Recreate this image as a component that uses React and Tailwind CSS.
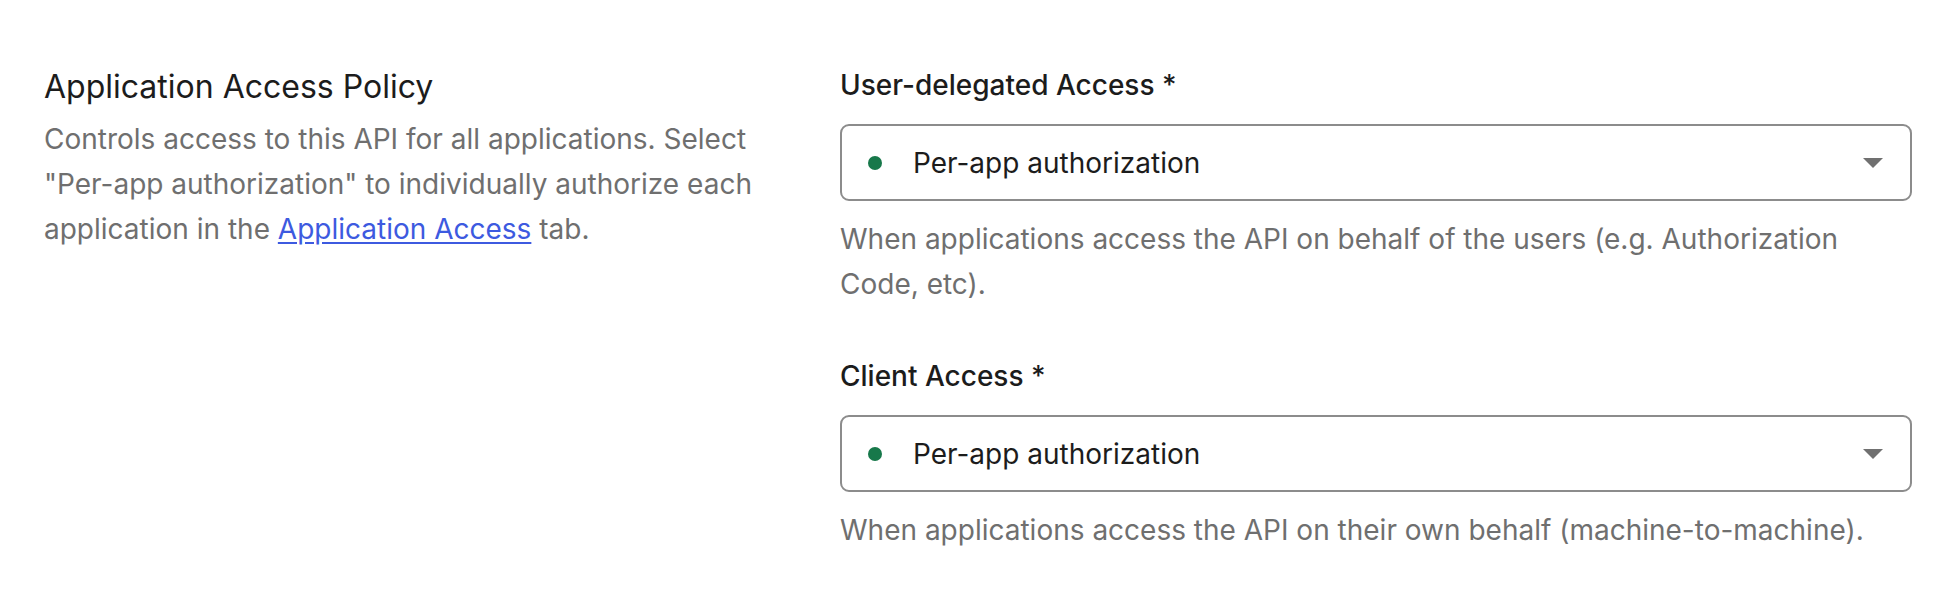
import { useState } from 'react';

const SelectField = ({ label, value, help }) => (
  <div className="flex flex-col">
    <label className="text-[28px] leading-[36px] text-[#1c1c1c] font-medium">{label}</label>
    <div className="mt-[21px] h-[77px] border-2 border-[#8c8c8c] rounded-[9px] flex items-center pl-[26px] pr-[27px]">
      <span className="w-[14px] h-[14px] rounded-full bg-[#17784a]" />
      <span className="ml-[31px] text-[28px] text-[#1c1c1c] flex-1">{value}</span>
      <svg width="20" height="10" viewBox="0 0 20 10">
        <path d="M0 0 L20 0 L10 10 Z" fill="#707070" />
      </svg>
    </div>
    <p className="mt-[16px] max-w-[1040px] text-[28px] leading-[45px] text-[#6f6f6f]">{help}</p>
  </div>
);

const App = () => {
  const [user] = useState('Per-app authorization');
  const [client] = useState('Per-app authorization');

  return (
    <div className="w-[1958px] h-[600px] bg-white font-['Inter',sans-serif] flex pt-[67px] pl-[44px] pr-[46px]">
      <div className="w-[796px] pr-[26px]">
        <h2 className="text-[32px] leading-[40px] text-[#1c1c1c]">Application Access Policy</h2>
        <p className="mt-[10px] text-[28px] leading-[45px] text-[#6f6f6f]">
          Controls access to this API for all applications. Select "Per-app authorization" to individually authorize each application in the{' '}
          <a href="#" className="text-[#3d5ae0] underline underline-offset-[3px]">Application Access</a> tab.
        </p>
      </div>
      <div className="flex-1 flex flex-col gap-[51px]">
        <SelectField
          label="User-delegated Access *"
          value={user}
          help="When applications access the API on behalf of the users (e.g. Authorization Code, etc)."
        />
        <SelectField
          label="Client Access *"
          value={client}
          help="When applications access the API on their own behalf (machine-to-machine)."
        />
      </div>
    </div>
  );
};

export default App;
